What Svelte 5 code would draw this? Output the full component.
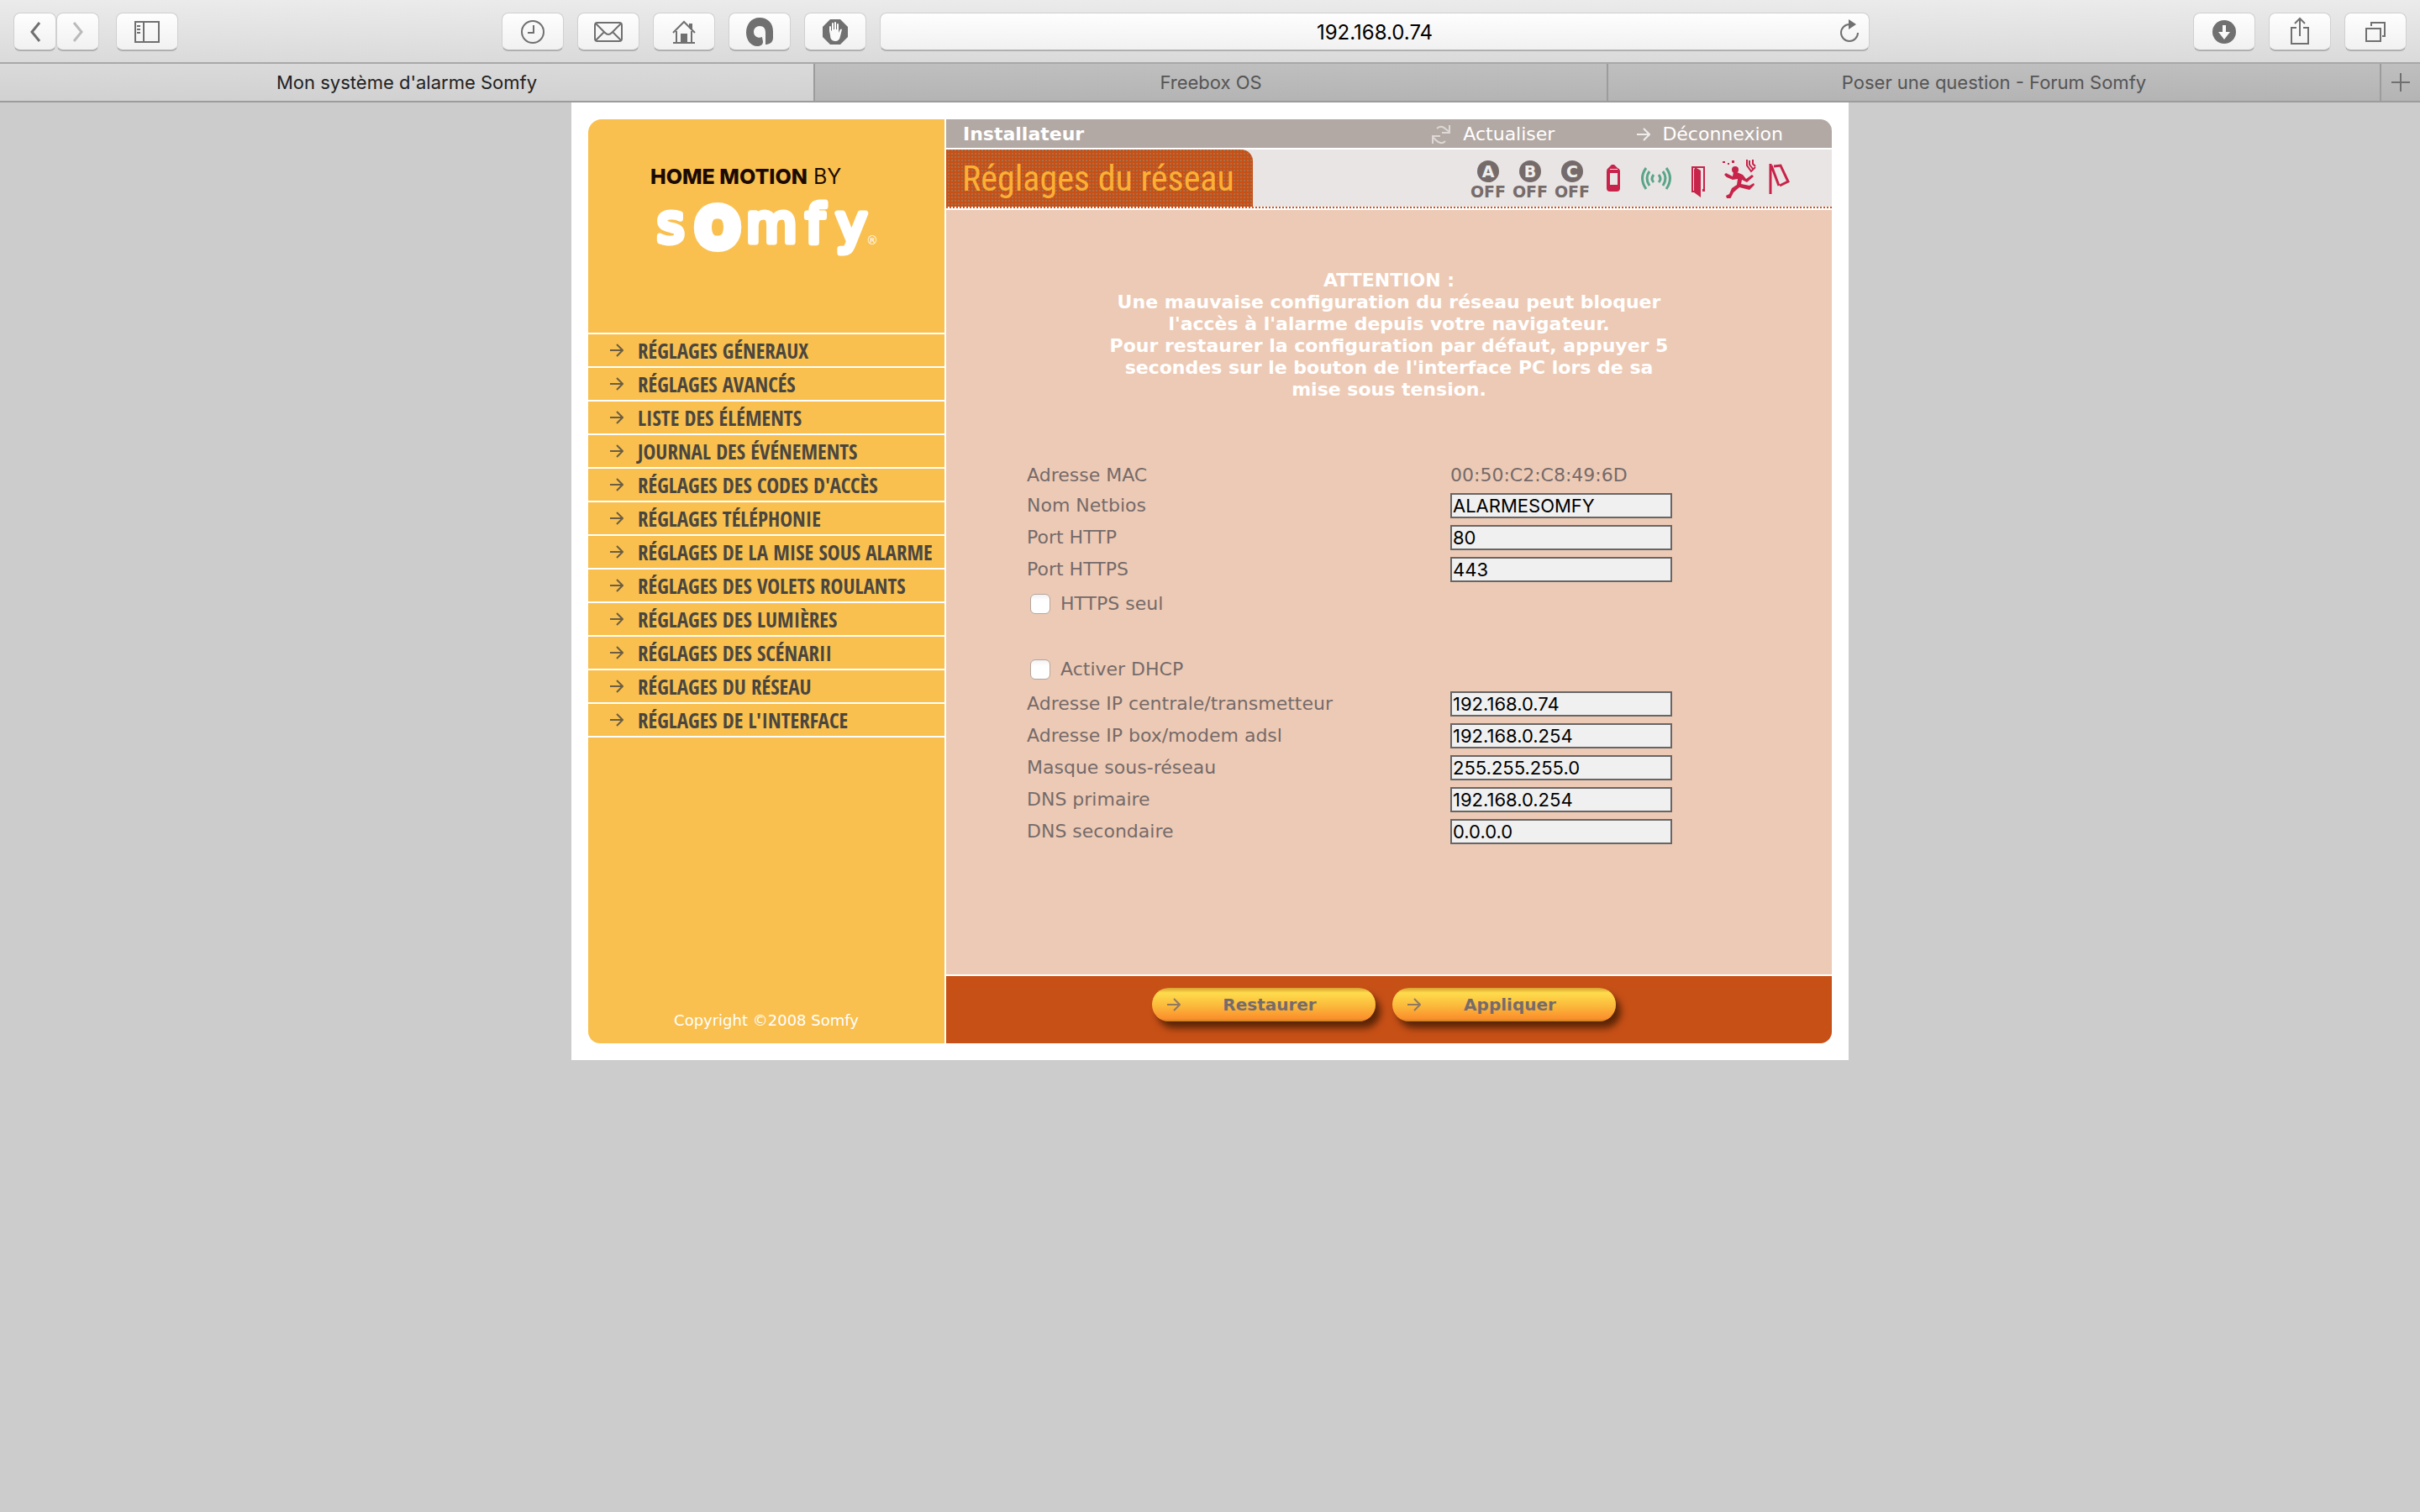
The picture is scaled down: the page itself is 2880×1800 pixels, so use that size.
<script lang="ts">
	interface Field {
		id: string;
		label: string;
		value: string;
	}

	const tabs = ["Mon système d'alarme Somfy", 'Freebox OS', 'Poser une question - Forum Somfy'];

	const menu = [
		'Réglages géneraux',
		'Réglages avancés',
		'Liste des éléments',
		'Journal des événements',
		"Réglages des codes d'accès",
		'Réglages téléphonie',
		'Réglages de la mise sous alarme',
		'Réglages des volets roulants',
		'Réglages des lumières',
		'Réglages des scénarii',
		'Réglages du réseau',
		"Réglages de l'interface"
	];

	const zones = ['A', 'B', 'C'];

	const ports: Field[] = [
		{ id: 'netbios', label: 'Nom Netbios', value: 'ALARMESOMFY' },
		{ id: 'http', label: 'Port HTTP', value: '80' },
		{ id: 'https', label: 'Port HTTPS', value: '443' }
	];

	const addresses: Field[] = [
		{ id: 'ip', label: 'Adresse IP centrale/transmetteur', value: '192.168.0.74' },
		{ id: 'gateway', label: 'Adresse IP box/modem adsl', value: '192.168.0.254' },
		{ id: 'mask', label: 'Masque sous-réseau', value: '255.255.255.0' },
		{ id: 'dns1', label: 'DNS primaire', value: '192.168.0.254' },
		{ id: 'dns2', label: 'DNS secondaire', value: '0.0.0.0' }
	];

	let url = '192.168.0.74';
	let httpsOnly = false;
	let dhcp = false;
</script>

{#snippet arrow()}
	<svg class="arrow" width="16" height="16" viewBox="0 0 16 16" aria-hidden="true">
		<path d="M0 8h15M8 1l7 7-7 7" />
	</svg>
{/snippet}

{#snippet textField(field: Field)}
	<div class="row">
		<label for={field.id}>{field.label}</label>
		<input id={field.id} type="text" bind:value={field.value} />
	</div>
{/snippet}

<header class="toolbar">
	<div class="group">
		<div class="pair">
			<button class="tool small" aria-label="Précédent">
				<svg width="14" height="26" viewBox="0 0 14 26"><path d="M12 2L3 13l9 11" stroke-width="3" /></svg>
			</button>
			<button class="tool small off" aria-label="Suivant">
				<svg width="14" height="26" viewBox="0 0 14 26"><path d="M2 2l9 11-9 11" stroke-width="3" /></svg>
			</button>
		</div>
		<button class="tool" aria-label="Barre latérale">
			<svg width="32" height="26" viewBox="0 0 32 26">
				<path d="M2 1h28v24H2zM12 1v24M4 6h4M4 10h4M4 14h4" />
			</svg>
		</button>
	</div>

	<div class="group middle">
		<button class="tool" aria-label="Historique">
			<svg width="30" height="30" viewBox="0 0 30 30">
				<circle cx="15" cy="15" r="13" />
				<path d="M16 7v9H9" />
			</svg>
		</button>
		<button class="tool" aria-label="Courrier">
			<svg width="34" height="26" viewBox="0 0 34 26">
				<rect x="1" y="2" width="32" height="22" rx="3" />
				<path d="M2 3l11 11q4 4 8 0L32 3M2 23l10-10M32 23L22 13" />
			</svg>
		</button>
		<button class="tool" aria-label="Accueil">
			<svg width="28" height="30" viewBox="0 0 28 30">
				<path d="M1 16L14 3l13 13M5 14v13M23 14v13M1 28h26" />
				<path class="solid" d="M20 5h4v9l-4-4zM10 17h8v10h-8z" />
			</svg>
		</button>
		<button class="tool" aria-label="Extension">
			<svg width="34" height="36" viewBox="0 0 34 36">
				<path class="solid" d="M17 1C7 1 1 9 1 19c0 9 6 16 13 16 4 0 7-2 7-5 0-2-1-4-1-6-4 2-10 0-10-6 0-4 3-7 7-7 5 0 7 3 7 8v14c4 0 9-2 9-8V17C33 7 26 1 17 1z" />
			</svg>
		</button>
		<button class="tool" aria-label="Bloqueur">
			<svg width="30" height="30" viewBox="0 0 30 30">
				<path class="solid" d="M9 0h12l9 9v12l-9 9H9l-9-9V9z" />
				<path class="hand" d="M8 14V9q0-1 1-1t1 1v5l1-1V5q0-1 1-1t1 1v7h1V4q0-1 1-1t1 1v8h1V6q0-1 1-1t1 1v10l2-4q1-1 2 0l-2 8q-1 6-6 6-6 0-6-7z" />
			</svg>
		</button>
		<div class="address">
			<input type="text" aria-label="Adresse" bind:value={url} />
			<button class="reload" aria-label="Recharger">
				<svg width="24" height="28" viewBox="0 0 24 28">
					<path d="M12 6a10 10 0 1 0 10 10" />
					<path class="solid" d="M11 0l9 6-9 6z" />
				</svg>
			</button>
		</div>
	</div>

	<div class="group">
		<button class="tool" aria-label="Téléchargements">
			<svg width="28" height="28" viewBox="0 0 28 28">
				<circle class="solid" cx="14" cy="14" r="14" />
				<path class="hand" d="M12 6h4v8h5l-7 9-7-9h5z" />
			</svg>
		</button>
		<button class="tool" aria-label="Partager">
			<svg width="26" height="38" viewBox="0 0 26 38">
				<path d="M9 14H3v19h20V14h-6M13 24V3M7 9l6-6 6 6" />
			</svg>
		</button>
		<button class="tool" aria-label="Onglets">
			<svg width="26" height="26" viewBox="0 0 26 26">
				<path d="M2 9h17v15H2zM8 6V2h16v16h-3" />
			</svg>
		</button>
	</div>
</header>

<nav class="tabs">
	{#each tabs as tab, i (tab)}
		<button class="tab" class:active={i === 0}>{tab}</button>
	{/each}
	<button class="tab" aria-label="Nouvel onglet">
		<svg width="22" height="22" viewBox="0 0 22 22"><path d="M11 0v22M0 11h22" /></svg>
	</button>
</nav>

<div class="page">
	<aside>
		<svg class="brand" width="424" height="254" viewBox="0 0 424 254">
			<text class="tagline" x="74" y="77"><tspan font-weight="800">HOME MOTION</tspan> BY</text>
			<text class="logo" x="82" y="146">s</text>
			<text class="logo o" x="154" y="151">o</text>
			<text class="logo" x="188" y="146">m</text>
			<text class="logo" x="259" y="146">f</text>
			<text class="logo" x="295" y="146">y</text>
			<text class="mark" x="331" y="149">®</text>
		</svg>
		<ul>
			{#each menu as item (item)}
				<li><a href="#top">{@render arrow()}{item}</a></li>
			{/each}
		</ul>
		<div class="copyright">Copyright ©2008 Somfy</div>
	</aside>

	<main>
		<div class="userbar">
			<b>Installateur</b>
			<a href="#top">
				<svg class="refresh" width="24" height="24" viewBox="0 0 24 24" aria-hidden="true">
					<path d="M7 5q5-5 11 1l4 3M22 1v9h-9M17 20q-5 5-11-1l-4-4M2 23v-9h9" />
				</svg>
				Actualiser
			</a>
			<a href="#top">{@render arrow()}Déconnexion</a>
		</div>

		<div class="titlebar">
			<h1>Réglages du réseau</h1>
			<div class="status">
				{#each zones as zone (zone)}
					<svg width="50" height="56" viewBox="0 -4 50 56">
						<circle cx="25" cy="16" r="13" fill="#766b6b" />
						<text class="zone" x="25" y="23">{zone}</text>
						<text class="state" x="25" y="47">OFF</text>
					</svg>
				{/each}
				<svg class="red" width="50" height="48" viewBox="0 0 50 48">
					<path d="M18 12l4-4h3l4 4q3 1 3 4v20q0 4-4 4h-8q-4 0-4-4V16q0-3 2-4zM20 18v14h9V18zM20 13v1h9v-1z" fill-rule="evenodd" />
				</svg>
				<svg class="waves" width="50" height="48" viewBox="0 0 50 48">
					<path d="M13 12q-9 12 0 25M17 16q-6 8 0 17M22 20q-4 5 0 9M37 12q9 12 0 25M33 16q6 8 0 17M28 20q4 5 0 9" />
				</svg>
				<svg class="red" width="50" height="48" viewBox="0 0 50 48">
					<path d="M17 10h16v30h-3v-3h1V12h-8l5 3v32l-8-6h-3zM19 12v27h1V14l1-2z" fill-rule="evenodd" />
				</svg>
				<svg class="red" width="50" height="48" viewBox="1 0 50 48">
					<circle cx="20" cy="14" r="4" />
					<path d="M22 17l7 3 4 5 7-5 2 2-8 7-6-3-1 5 10 2 5-3 1 2-6 6-12-3-7 6-4 8-4-1-1-3 4-2 3-7 6-4 1-7-6 1-7-3-3-3 2-2 8 4 1-5z" />
					<path d="M5 4h3v2H5zM11 6h2v2h-2zM16 3h3v3h-3z" />
					<path class="line" d="M34 2v7l5 7 5-5M37 3v5l4 5M41 2v5l3 3" />
				</svg>
				<svg class="red" width="50" height="48" viewBox="2 0 50 48">
					<path class="line thick" d="M13 7v36M14 9l9 24M17 10l8-1 9 19-10 5" />
				</svg>
			</div>
		</div>

		<form on:submit|preventDefault>
			<p class="warning">
				ATTENTION :<br />
				Une mauvaise configuration du réseau peut bloquer<br />
				l'accès à l'alarme depuis votre navigateur.<br />
				Pour restaurer la configuration par défaut, appuyer 5<br />
				secondes sur le bouton de l'interface PC lors de sa<br />
				mise sous tension.
			</p>

			<div class="fields">
				<div class="row">
					<span>Adresse MAC</span>
					<span>00:50:C2:C8:49:6D</span>
				</div>
				{#each ports as field (field.id)}
					{@render textField(field)}
				{/each}
				<label class="check"><input type="checkbox" bind:checked={httpsOnly} />HTTPS seul</label>
				<label class="check dhcp"><input type="checkbox" bind:checked={dhcp} />Activer DHCP</label>
				{#each addresses as field (field.id)}
					{@render textField(field)}
				{/each}
			</div>

			<div class="actions">
				<button type="reset">{@render arrow()}<span>Restaurer</span></button>
				<button type="submit">{@render arrow()}<span>Appliquer</span></button>
			</div>
		</form>
	</main>
</div>

<style>
	:global(body) {
		background: #ccc;
		font-family: Verdana, 'DejaVu Sans', sans-serif;
		font-size: 22px;
		line-height: 26px;
	}
	button,
	input {
		font: inherit;
		box-sizing: border-box;
		margin: 0;
	}
	svg {
		display: block;
		flex: none;
	}
	a {
		color: inherit;
		text-decoration: none;
	}

	/* browser */
	.toolbar {
		display: flex;
		justify-content: space-between;
		padding: 15px 16px 13px;
		background: linear-gradient(#ebebeb, #dadada);
		border-bottom: 2px solid #a8a8a8;
	}
	.group {
		display: flex;
		gap: 16px;
	}
	.group:first-child {
		gap: 20px;
	}
	.middle {
		flex: 0 1 1628px;
	}
	.pair {
		display: flex;
	}
	.tool,
	.address {
		display: flex;
		align-items: center;
		justify-content: center;
		height: 46px;
		background: linear-gradient(#fefefe, #f1f1f1);
		border: 1px solid #d0d0d0;
		border-bottom: 2px solid #b0b0b0;
		border-radius: 8px;
		box-sizing: border-box;
	}
	.tool {
		width: 74px;
		padding: 0;
	}
	.tool.small {
		width: 51px;
	}
	.toolbar svg,
	.tabs svg {
		fill: none;
		stroke: #707070;
		stroke-width: 2;
	}
	.toolbar .off svg {
		stroke: #bbb;
	}
	.toolbar .solid {
		fill: #707070;
		stroke: none;
	}
	.toolbar .hand {
		fill: #fafafa;
		stroke: none;
	}
	.address {
		position: relative;
		flex: 1;
	}
	.address input {
		width: 100%;
		padding: 2px 0 0;
		border: 0;
		background: none;
		text-align: center;
		font-family: Inter, sans-serif;
		font-size: 24px;
	}
	.reload {
		position: absolute;
		right: 11px;
		top: 7px;
		padding: 0;
		border: 0;
		background: none;
	}
	.tabs {
		display: grid;
		grid-template-columns: 970fr 944fr 920fr 46px;
		border-bottom: 2px solid #9c9c9c;
	}
	.tab {
		display: flex;
		align-items: center;
		justify-content: center;
		height: 44px;
		padding: 0;
		border: 0;
		border-right: 2px solid #9c9c9c;
		background: linear-gradient(#bfbfbf, #b4b4b4);
		color: #555;
		font-family: Inter, sans-serif;
	}
	.tab.active {
		background: linear-gradient(#dadada, #d1d1d1);
		color: #222;
	}
	.tab:last-child {
		border-right: 0;
	}

	/* page */
	.page {
		display: flex;
		gap: 2px;
		max-width: 1480px;
		margin: 0 auto;
		padding: 20px;
		background: #fff;
	}
	aside {
		display: flex;
		flex-direction: column;
		flex: 0 0 424px;
		min-width: 0;
		background: #f9c04f;
		border-radius: 16px 0 0 14px;
	}
	.tagline {
		fill: #1c0a00;
		font-family: Inter, sans-serif;
		font-size: 25px;
	}
	.logo {
		fill: #fff;
		stroke: #fff;
		stroke-width: 7;
		stroke-linejoin: round;
		font-family: 'DejaVu Sans', sans-serif;
		font-size: 62px;
	}
	.logo.o {
		stroke-width: 13;
		font-family: Lato, sans-serif;
		font-size: 90px;
		text-anchor: middle;
	}
	.mark {
		fill: #fff;
		font-size: 14px;
	}
	ul {
		margin: 0;
		padding: 0;
		list-style: none;
		border-top: 2px solid #fff;
	}
	li {
		border-bottom: 2px solid #fff;
	}
	li a {
		display: flex;
		align-items: center;
		gap: 17px;
		height: 38px;
		padding-left: 26px;
		color: #4a463f;
		font-family: 'Open Sans Condensed', 'Roboto Condensed', 'Liberation Sans Narrow', sans-serif;
		font-size: 25px;
		font-weight: 500;
		text-transform: uppercase;
		white-space: nowrap;
	}
	.arrow {
		fill: none;
		stroke: currentColor;
		stroke-width: 2;
		opacity: 0.8;
	}
	.copyright {
		margin-top: auto;
		padding-bottom: 14px;
		color: #fff;
		font-size: 18px;
		text-align: center;
	}
	main {
		flex: 1;
		min-width: 0;
	}
	.userbar {
		display: flex;
		align-items: center;
		gap: 98px;
		height: 32px;
		padding: 2px 58px 0 20px;
		background: #b3a9a4;
		border-radius: 0 14px 0 0;
		color: #fff;
	}
	.userbar b {
		margin-right: auto;
	}
	.userbar a {
		display: flex;
		align-items: center;
		gap: 14px;
	}
	.refresh {
		fill: none;
		stroke: #ddd8d5;
		stroke-width: 2;
	}
	.titlebar {
		display: flex;
		justify-content: space-between;
		margin-top: 2px;
		background:
			repeating-linear-gradient(90deg, #cc5522 0 2px, #fff 2px 4px) bottom / 100% 2px no-repeat,
			#e9e5e4;
		border-bottom: 2px solid #fff;
		padding-bottom: 2px;
		background-clip: padding-box;
	}
	h1 {
		margin: 0;
		padding: 0 22px 0 19px;
		height: 68px;
		color: #fbb034;
		background:
			conic-gradient(#a8714c 25%, transparent 0) 0 0 / 4px 4px,
			#c65016;
		border-radius: 0 14px 0 0;
		font-family: 'Roboto Condensed', 'Open Sans Condensed', 'Liberation Sans Narrow', sans-serif;
		font-size: 42px;
		font-weight: 400;
		line-height: 70px;
	}
	.status {
		display: flex;
		align-items: center;
		padding-right: 34px;
	}
	.status text {
		text-anchor: middle;
		font-weight: bold;
	}
	.zone {
		fill: #eee;
		font-size: 19px;
	}
	.state {
		fill: #766b6b;
		font-size: 19px;
	}
	.red {
		fill: #c8234a;
	}
	.line,
	.waves {
		fill: none;
		stroke: #c8234a;
		stroke-width: 2;
	}
	.thick {
		stroke-width: 3;
	}
	.waves {
		stroke: #5aa58a;
		stroke-width: 3;
	}
	form {
		background: #edcab5;
		border-radius: 0 0 14px 0;
	}
	.warning {
		margin: 0;
		padding: 71px 0 76px;
		color: #fff;
		font-weight: bold;
		text-align: center;
	}
	.fields {
		display: flex;
		flex-direction: column;
		gap: 8px;
		padding: 0 96px 155px;
		color: #756a6a;
	}
	.row {
		display: grid;
		grid-template-columns: 504px 264px;
		align-items: center;
	}
	.row input {
		height: 30px;
		padding: 0 1px;
		border: 2px solid #666;
		background: #f0f0f0;
		color: #000;
		font-family: Inter, sans-serif;
	}
	.check {
		display: flex;
		align-items: center;
		gap: 12px;
		height: 36px;
		padding-left: 4px;
	}
	.dhcp {
		margin-top: 34px;
	}
	.check input {
		appearance: none;
		width: 24px;
		height: 24px;
		border: 1px solid #b5a59c;
		border-radius: 6px;
		background: linear-gradient(#f2f2f2, #fff 30%);
	}
	.actions {
		display: flex;
		justify-content: center;
		gap: 20px;
		padding: 14px 12px 26px 0;
		background: #c75017;
		border-top: 2px solid #fff;
		border-radius: 0 0 14px 0;
	}
	.actions button {
		display: flex;
		align-items: center;
		width: 266px;
		height: 40px;
		padding: 0 20px 0 18px;
		border: 0;
		border-radius: 20px;
		background: linear-gradient(#d9a030, #fedc4c 15%, #fbb83a 55%, #fb8f2c 92%, #c88020);
		box-shadow: 6px 8px 8px #5a2406;
		color: #766b6b;
		font-size: 20px;
		font-weight: bold;
	}
	.actions span {
		flex: 1;
		text-align: center;
	}
</style>
